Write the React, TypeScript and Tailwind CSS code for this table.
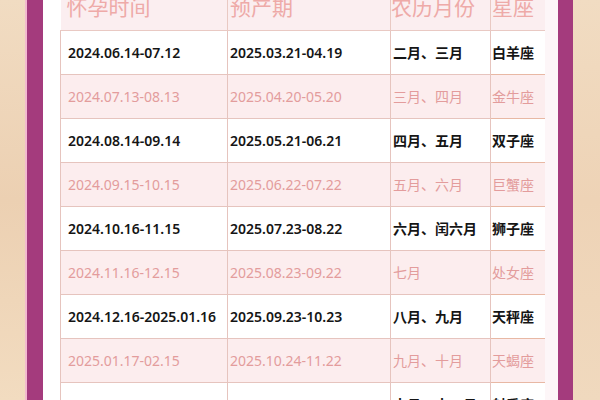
const rows: [string, string, string, string][] = [
  ["2024.06.14-07.12", "2025.03.21-04.19", "二月、三月", "白羊座"],
  ["2024.07.13-08.13", "2025.04.20-05.20", "三月、四月", "金牛座"],
  ["2024.08.14-09.14", "2025.05.21-06.21", "四月、五月", "双子座"],
  ["2024.09.15-10.15", "2025.06.22-07.22", "五月、六月", "巨蟹座"],
  ["2024.10.16-11.15", "2025.07.23-08.22", "六月、闰六月", "狮子座"],
  ["2024.11.16-12.15", "2025.08.23-09.22", "七月", "处女座"],
  ["2024.12.16-2025.01.16", "2025.09.23-10.23", "八月、九月", "天秤座"],
  ["2025.01.17-02.15", "2025.10.24-11.22", "九月、十月", "天蝎座"],
  ["2025.02.16-03.14", "2025.11.23-12.21", "十月、十一月", "射手座"],
];

const font = { fontFamily: '"Noto Sans", "Noto Sans CJK SC", sans-serif' };

export default function App() {
  return (
    <div className="w-[600px] h-[400px] overflow-hidden flex bg-[#f0d7bb]" style={font}>
      <div className="w-[25px] shrink-0 bg-gradient-to-b from-[#f1dcc2] via-[#ecd0b2] to-[#f2dcc0]" />
      <div className="w-[18px] shrink-0 bg-[#a43b7d] border-l-2 border-[#f3b9cf]" />
      <div className="w-[17px] shrink-0 bg-white" />
      <div className="w-[485px] shrink-0 bg-white overflow-hidden">
        <table className="-mt-[14px] border-collapse table-fixed w-[486px]">
          <colgroup>
            <col className="w-[167px]" />
            <col className="w-[163px]" />
            <col className="w-[100px]" />
            <col className="w-[56px]" />
          </colgroup>
          <thead>
            <tr className="h-[44px] bg-[#fbeef0] text-[#eeaaa8] text-[21px] leading-none">
              <th className="text-left font-normal pl-[6px] border-r border-b border-[#e9c9c3]">怀孕时间</th>
              <th className="text-left font-normal pl-[2px] border-r border-b border-[#e9c9c3]">预产期</th>
              <th className="text-left font-normal pl-0 border-r border-b border-[#e9c9c3]">农历月份</th>
              <th className="text-left font-normal pl-[1px] border-r border-b border-[#e9c9c3]">星座</th>
            </tr>
          </thead>
          <tbody>
            {rows.map((r, i) => {
              const pink = i % 2 === 1;
              const rowCls = pink
                ? "h-[44px] bg-[#fcedee] text-[#e39c9c] font-normal"
                : "h-[44px] bg-white text-[#151515] font-semibold";
              return (
                <tr key={i} className={rowCls + " text-[14px]"}>
                  <td className="pl-[7px] border-r border-b border-l border-[#e6c4be] whitespace-nowrap">{r[0]}</td>
                  <td className="pl-[2px] border-r border-b border-[#e6c4be] whitespace-nowrap">{r[1]}</td>
                  <td className="pl-[2px] border-r border-b border-[#e6c4be] whitespace-nowrap">{r[2]}</td>
                  <td className="pl-[1px] border-r border-b border-[#e8b8a4] whitespace-nowrap">{r[3]}</td>
                </tr>
              );
            })}
          </tbody>
        </table>
      </div>
      <div className="w-[13px] shrink-0 bg-[#fdf6f8]" />
      <div className="w-[15px] shrink-0 bg-[#a43b7d]" />
      <div className="flex-1 bg-gradient-to-b from-[#f1dcc2] via-[#eed3b6] to-[#f0d9be]" />
    </div>
  );
}
